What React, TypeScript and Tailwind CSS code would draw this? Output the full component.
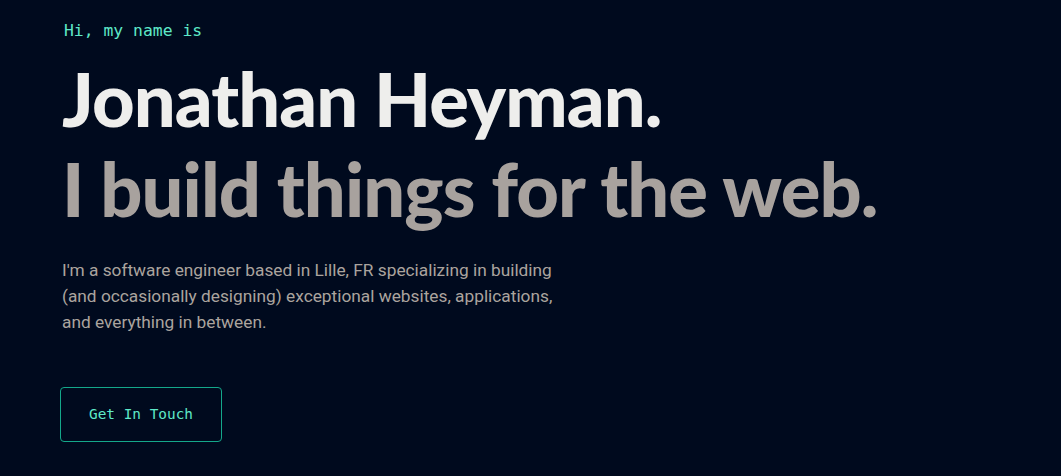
import React from "react";

export default function App() {
  return (
    <div className="min-h-[476px] w-full bg-[#000a1e] pl-[62px] pt-[19px]">
      <p className="pl-[2px] font-['DejaVu_Sans_Mono',monospace] text-[16.4px] leading-[24px] text-[#5ee8c8]">
        Hi, my name is
      </p>
      <h1 className="mt-[16px] font-['Lato',sans-serif] text-[74px] font-black leading-[80px] tracking-[-0.9px] text-[#eeeeec]">
        Jonathan Heyman.
      </h1>
      <h2 className="mt-[10px] font-['Lato',sans-serif] text-[74px] font-black leading-[80px] tracking-[-0.9px] text-[#a8a29e]">
        I build things for the web.
      </h2>
      <p className="mt-[28px] max-w-[500px] font-['Roboto',sans-serif] text-[17.3px] leading-[26px] text-[#aba49e]">
        I'm a software engineer based in Lille, FR specializing in building
        (and occasionally designing) exceptional websites, applications, and
        everything in between.
      </p>
      <button className="-ml-[2px] mt-[52px] h-[55px] w-[162px] rounded-[4px] border border-[#14a88a] font-['DejaVu_Sans_Mono',monospace] text-[14.4px] text-[#5ee8c8]">
        Get In Touch
      </button>
    </div>
  );
}
